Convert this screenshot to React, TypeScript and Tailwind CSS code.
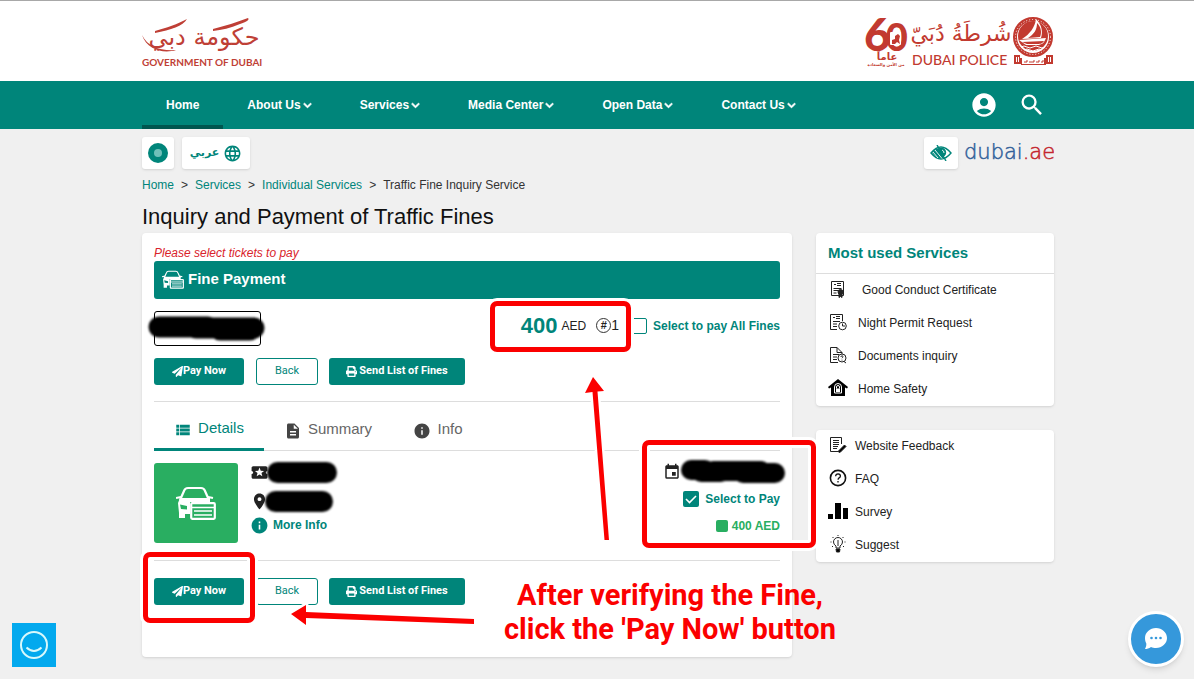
import React from 'react';
import {
  MdAccountCircle,
  MdDescription,
  MdEvent,
  MdInfo,
  MdLanguage,
  MdLocalPlay,
  MdPlace,
  MdSearch,
  MdViewList,
} from 'react-icons/md';
import { FaChevronDown, FaPaperPlane, FaPrint } from 'react-icons/fa';

const navItems = [
  { label: 'Home', active: true },
  { label: 'About Us' },
  { label: 'Services' },
  { label: 'Media Center' },
  { label: 'Open Data' },
  { label: 'Contact Us' },
];

const GovernmentLogo = () => (
  <svg width="122" height="52" viewBox="0 0 122 52" fill="#bf3f36" role="img" aria-label="Government of Dubai">
    <path d="M13 14 C24 11 36 7 45 2 C41 9 29 13 13 16Z" />
    <path d="M71 12 C83 9 95 5 106 1 C108 3 104 5 98 7 C88 11 80 13 71 14Z" />
    <path d="M0 18 C6 30 18 34 34 33 C22 37 5 33 0 18Z" />
    <text x="62" y="28" fontSize="24" textAnchor="middle" fontFamily="'DejaVu Sans', sans-serif" direction="rtl">
      حكومة دبي
    </text>
    <text x="0" y="49" fontSize="10" fontWeight="700" fontFamily="Lato, sans-serif">
      GOVERNMENT OF DUBAI
    </text>
  </svg>
);

const PoliceLogo = () => (
  <svg width="190" height="52" viewBox="0 0 190 52" fill="#c23a30" role="img" aria-label="Dubai Police">
    <text x="0" y="34" fontSize="46" fontWeight="900" fontFamily="Lato, sans-serif">
      6<tspan dx="-5" fontSize="38">0</tspan>
    </text>
    <rect x="26" y="15" width="11" height="13" rx="1" fill="#fff" />
    <path d="M28 27v-4l3-1v-3l3-2 2 2-1 4 1 4-3-2-2 2z" />
    <text x="23" y="43" fontSize="10" fontWeight="700" textAnchor="middle" fontFamily="'DejaVu Sans', sans-serif">عاماً</text>
    <text x="22" y="49" fontSize="4" fontWeight="700" textAnchor="middle" fontFamily="'DejaVu Sans', sans-serif">من الأمن والسعادة</text>

    <text x="97" y="24" fontSize="22" textAnchor="middle" fontFamily="'DejaVu Sans', sans-serif">شُرطَةُ دُبَيّ</text>
    <text x="48" y="48" fontSize="14" fontWeight="500" fontFamily="Lato, sans-serif">DUBAI POLICE</text>

    {/* crest */}
    <circle cx="169" cy="20" r="18" fill="none" stroke="#c23a30" strokeWidth="4" />
    <circle cx="169" cy="20" r="17.500" fill="none" stroke="#fff" strokeWidth="1" strokeDasharray="1 2" />
    <circle cx="169" cy="19" r="15" fill="#c23a30" />
    <path d="M172 2 C178 8 179 15 177 21 L158 22 C166 17 171 10 172 2Z" fill="#fff" />
    <path d="M173 6 C173 13 170 17 164 21 L176 20 C178 15 177 10 173 6Z" fill="#c23a30" />
    <path d="M155 23 L182 21 C180 26 178 28 173 28 H162Z" fill="#fff" />
    <path d="M158 25 L180 24 C178 27 176 27 172 27 H163Z" fill="#c23a30" />
    <path d="M157 30q3-2 6 0t6 0 6 0 6 0M160 33q3-2 6 0t6 0 6 0" fill="none" stroke="#fff" strokeWidth="1" />
    <path d="M150 38 h6 v3 h26 v-3 h7 v9 h-7 v1 h-25 v-1 h-7z" />
    <rect x="158" y="41" width="22" height="6" fill="#fff" />
    <path d="M160 45h3v-2M165 45h5v-2M172 45h3v-2M177 45h2v-2" fill="none" stroke="#c23a30" strokeWidth="1" />
    <path d="M152.500 40v5M154.500 40v5M184.500 40v5M186.500 40v5" stroke="#fff" />
  </svg>
);

const DubaiAeLogo = () => (
  <svg width="90" height="20" viewBox="0 0 90 20" fontFamily="'DejaVu Sans', sans-serif" fontWeight="200" fontSize="21" strokeWidth="0.500">
    <text x="0" y="16" fill="#34629b" stroke="#34629b">
      dubai<tspan fill="#c4262e" stroke="#c4262e">.ae</tspan>
    </text>
  </svg>
);

const CarCard = ({ className }: { className: string }) => (
  <svg className={className} viewBox="0 0 40 34" fill="none" stroke="#fff" strokeWidth="2.200" aria-hidden="true">
    <path d="M4 14 L8 5 Q9 2 12 2 H25 Q28 2 29 5 L33 14" />
    <path d="M0 12 L5 11 M32 11 L37 12" />
    <path d="M4 12 H34 V16 H14 V28 H9 V32 H3 V27 L2 17Z" fill="#fff" stroke="none" />
    <path d="M4 18.500 L11 20 V23.500 L5 23Z" fill="currentColor" stroke="none" />
    <rect x="15.200" y="17.200" width="23.600" height="15.600" rx="1" />
    <path d="M16 21.500 H38 M18 25 H36 M18 29 H36" strokeWidth="1.600" />
  </svg>
);

const EyeIcon = () => (
  <svg width="22" height="16" viewBox="0 0 22 16" fill="none" stroke="#00857a" strokeWidth="1.400" aria-hidden="true">
    <path d="M1 8 Q6 2 11 2 T21 8 Q16 14 11 14 T1 8Z" />
    <path d="M2 8 Q5 3 11 3 L14 13 Q7 15 2 8Z" fill="#00857a" stroke="none" />
    <circle cx="11.500" cy="7.500" r="4" fill="#00857a" />
    <path d="M3 7 L8 13 M5 5 L12 13.500 M12 5 a3 3 0 0 1 2 3" stroke="#fff" strokeWidth="0.900" />
    <path d="M7 0 L16 16" />
  </svg>
);

/* Sidebar drawings */
const CertificateIcon = () => (
  <svg width="20" height="18" viewBox="0 0 20 18" fill="none" stroke="#222" aria-hidden="true">
    <path d="M3.500 1.500h12v14h-12zM6 4.500h2M9 3.500h4M9 5.500h4M5.500 8.500h8M5.500 10.500h5M5.500 13h3" />
    <circle cx="12.500" cy="12" r="2.500" fill="#222" />
    <path d="M11 14v3.500l1.500-1 1.500 1V14" fill="#222" />
  </svg>
);

const PermitIcon = () => (
  <svg width="20" height="18" viewBox="0 0 20 18" fill="none" stroke="#222" aria-hidden="true">
    <path d="M9 16.500H2.500V1.500h12V8M5 4.500h2M8 3.500h4M8 5.500h4M5 8.500h7M5 11h4M5 13.500h4" />
    <circle cx="14.500" cy="13" r="3.800" fill="#fff" />
    <path d="M14.500 10.500V13H17" />
  </svg>
);

const InquiryIcon = () => (
  <svg width="20" height="18" viewBox="0 0 20 18" fill="none" stroke="#222" aria-hidden="true">
    <path d="M10 16.500H2.500v-15H9l5 5V8M9 1.500v5h5M5 8.500h6M5 11h4M5 13.500h4" />
    <circle cx="14" cy="12" r="4" fill="#fff" />
    <path d="M16 15.500l2 1.500M12.800 11q.2-1.300 1.400-1.200 1.400.4.500 1.500l-.7.900M14 13.700v.8" />
  </svg>
);

const SafetyIcon = () => (
  <svg width="20" height="18" viewBox="0 0 20 18" aria-hidden="true">
    <path d="M10 0 20 8l-1 1.500-2-1V17H3V8.500l-2 1L0 8z" fill="#000" />
    <path d="M6.500 14V8a3.500 3.500 0 0 1 7 0v6z" fill="none" stroke="#fff" />
    <path d="M8.500 9.500V8a1.500 1.500 0 0 1 3 0v1.500" fill="none" stroke="#fff" />
    <rect x="8" y="9.500" width="4" height="3.500" fill="#fff" />
  </svg>
);

const FeedbackIcon = () => (
  <svg width="20" height="18" viewBox="0 0 20 18" fill="none" stroke="#222" aria-hidden="true">
    <path d="M13.500 8V1.500h-11v14h8M5 4.500h6M5 6.500h6M5 8.500h6M5 10.500h5M5 12.500h4" />
    <path d="M10 15.500 16.500 9l1.500 1.500-6 6z" fill="#000" />
  </svg>
);

const FaqIcon = () => (
  <svg width="20" height="18" viewBox="0 0 20 18" fill="none" stroke="#111" strokeWidth="1.600" aria-hidden="true">
    <circle cx="10" cy="9" r="7.600" />
    <path d="M7.600 7.200q.2-2.400 2.500-2.400 2.300.2 2.300 2.200 0 1.200-1.300 1.900-1 .6-1 1.800M10 12v1.500" strokeWidth="1.300" />
  </svg>
);

const SurveyIcon = () => (
  <svg width="20" height="18" viewBox="0 0 20 18" fill="#000" aria-hidden="true">
    <path d="M0 12h5v5H0zM7 1h6v16H7zM15 6h5v11h-5z" />
  </svg>
);

const SuggestIcon = () => (
  <svg width="20" height="18" viewBox="0 0 20 18" fill="none" stroke="#222" aria-hidden="true">
    <path d="M8 13v-2Q5.500 9.500 5.500 7a4.500 4.500 0 0 1 9 0Q14.500 9.500 12 11v2z" />
    <path d="M10 5v6M10 0v1M4.500 2l1 1M15.500 2l-1 1M2.500 7h1M16.500 7h1M4 12l1-1M16 12l-1-1" />
    <path d="M8 14h4l-.5 3h-3z" fill="#000" />
  </svg>
);

const mostUsed = [
  { label: 'Good Conduct Certificate', icon: <CertificateIcon />, gap: 'gap-[14px]' },
  { label: 'Night Permit Request', icon: <PermitIcon />, gap: 'gap-[10px]' },
  { label: 'Documents inquiry', icon: <InquiryIcon />, gap: 'gap-[10px]' },
  { label: 'Home Safety', icon: <SafetyIcon />, gap: 'gap-[10px]' },
];

const helpLinks = [
  { label: 'Website Feedback', icon: <FeedbackIcon />, gap: 'gap-[7px]' },
  { label: 'FAQ', icon: <FaqIcon />, gap: 'gap-[7px]' },
  { label: 'Survey', icon: <SurveyIcon />, gap: 'gap-[7px]' },
  { label: 'Suggest', icon: <SuggestIcon />, gap: 'gap-[7px]' },
];

const LinkList = ({ items }: { items: typeof mostUsed }) => (
  <ul>
    {items.map((item) => (
      <li key={item.label}>
        <a href="#" className={`flex h-[33px] items-start pl-3 pt-1.5 text-[12px] leading-5 text-[#222] ${item.gap}`}>
          {item.icon}
          {item.label}
        </a>
      </li>
    ))}
  </ul>
);

const ActionRow = () => (
  <div className="flex h-[27px] font-[Roboto,sans-serif] text-[11px]">
    <button className="flex w-[90px] items-center justify-center rounded-[3px] bg-[#00857a] font-bold text-white">
      <FaPaperPlane size={11} />
      Pay Now
    </button>
    <button className="ml-3 w-[62px] rounded-[3px] border border-[#00857a] text-[#00857a]">Back</button>
    <button className="ml-[11px] flex w-[136px] items-center justify-center gap-0.5 rounded-[3px] bg-[#00857a] font-bold text-white">
      <FaPrint size={11} />
      Send List of Fines
    </button>
  </div>
);

const Annotations = () => (
  <div className="pointer-events-none absolute inset-0">
    <div className="absolute left-[348px] top-[172px] h-[51px] w-[141px] rounded-[7px] border-[5px] border-[#fb0000] shadow-[0_0_0_3px_#fff]" />
    <div className="absolute left-[500px] top-[311px] h-[108px] w-[174px] rounded-[7px] border-[5px] border-[#fb0000] shadow-[0_0_0_3px_#fff,inset_0_0_0_3px_#fff]" />
    <div className="absolute left-px top-[423px] h-[71px] w-[112px] rounded-[7px] border-[5px] border-[#fb0000] shadow-[0_0_0_3px_#fff,inset_0_0_0_3px_#fff]" />
    <svg className="absolute left-0 top-0" width="700" height="540" viewBox="0 0 700 540" fill="#fb0000" aria-hidden="true">
      <g stroke="#fff" strokeWidth="5" strokeLinejoin="round" paintOrder="stroke">
        <path d="M451 248 L462 262 L455.500 262.500 L467 411 L462.500 411 L450.500 263 L443 264Z" />
        <path d="M149 485 L164 476 L164 483 L332 490 L332 495 L164 489 L164 496Z" />
      </g>
    </svg>
    <p className="absolute left-[338px] top-[449px] w-[380px] text-center font-[Roboto,sans-serif] text-[29px] font-bold leading-[34px] text-[#fb0000]">
      After verifying the Fine,
      <br />
      click the 'Pay Now' button
    </p>
  </div>
);

export default function App() {
  return (
    <div className="min-h-screen bg-[#f0f0f0] font-['Liberation_Sans',Arial,sans-serif] text-[12px] text-[#222]">
      <header className="border-t border-[#a8a8a8] bg-white pl-0.5">
        <div className="mx-auto flex h-20 max-w-[912px] items-start justify-between pt-4">
          <GovernmentLogo />
          <PoliceLogo />
        </div>
      </header>

      <nav className="bg-[#00857a] pl-0.5 text-white">
        <div className="mx-auto flex h-12 max-w-[912px] items-stretch">
          {navItems.map((item) => (
            <a
              key={item.label}
              href="#"
              className={`flex items-center gap-0.5 border-b-4 px-6 pt-1 font-bold ${item.active ? 'border-[#00564f]' : 'border-transparent'}`}
            >
              {item.label}
              {!item.active && <FaChevronDown size={9} stroke="currentColor" strokeWidth={40} />}
            </a>
          ))}
          <div className="ml-auto flex items-center gap-5 pr-2">
            <button aria-label="Account">
              <MdAccountCircle size={28} />
            </button>
            <button aria-label="Search">
              <MdSearch size={28} />
            </button>
          </div>
        </div>
      </nav>

      <div className="pl-0.5">
        <div className="relative mx-auto max-w-[912px] pb-5 pt-2">
          {/* Toolbar */}
          <div className="flex h-8 items-stretch">
            <button aria-label="Theme" className="flex w-8 items-center justify-center rounded-[3px] bg-white shadow-sm">
              <span className="flex size-5 items-center justify-center rounded-full bg-[#00857a]">
                <span className="size-2 rounded-full bg-[#6fc0b9]" />
              </span>
            </button>
            <button className="ml-2 flex w-[68px] items-center justify-center gap-1 rounded-[3px] bg-white font-['DejaVu_Sans',sans-serif] text-[11px] font-bold text-[#00857a] shadow-sm">
              <span lang="ar">عربي</span>
              <MdLanguage size={19} />
            </button>
            <button aria-label="Accessibility" className="ml-auto flex w-[34px] items-center justify-center rounded-[3px] bg-white shadow-sm">
              <EyeIcon />
            </button>
            <a href="#" aria-label="dubai.ae" className="ml-[6px] flex items-center">
              <DubaiAeLogo />
            </a>
          </div>

          {/* Breadcrumb */}
          <div className="mt-2 flex h-4 items-center gap-[7px] text-[#333]">
            <a href="#" className="text-[#00857a]">Home</a>
            <span>&gt;</span>
            <a href="#" className="text-[#00857a]">Services</a>
            <span>&gt;</span>
            <a href="#" className="text-[#00857a]">Individual Services</a>
            <span>&gt;</span>
            <span>Traffic Fine Inquiry Service</span>
          </div>

          <h1 className="mt-2.5 h-[30px] text-[22px] leading-[28px] text-[#111]">Inquiry and Payment of Traffic Fines</h1>

          <div className="flex items-start gap-6">
            <main className="min-w-0 flex-1 rounded-[4px] bg-white px-3 pb-[52px] pt-3 shadow">
              <p className="h-4 text-[12px] italic leading-4 text-[#d9232b]">Please select tickets to pay</p>
              <div className="flex h-[38px] items-center gap-1 rounded-[3px] bg-[#00857a] pb-0.5 pl-2 text-[15px] font-bold text-white">
                <span className="text-[#00857a]">
                  <CarCard className="h-[19px] w-[22px]" />
                </span>
                <h2>Fine Payment</h2>
              </div>

              <div className="mt-3 flex h-[35px] items-start">
                <div className="relative h-full w-[107px]">
                  <input aria-label="Plate number" className="h-full w-full rounded-[3px] border border-black" />
                  <svg className="absolute -left-2 top-0 overflow-visible" width="120" height="35" viewBox="0 0 120 35" aria-hidden="true">
                    <path
                      d="M13 16 H62 M50 17 H108 M74 19 H104"
                      fill="none"
                      stroke="#000"
                      strokeWidth="21"
                      strokeLinecap="round"
                      className="blur-[1px]"
                    />
                  </svg>
                </div>
                <div className="ml-auto flex h-[29px] items-center">
                  <strong className="text-[22px] text-[#00857a]">400</strong>
                  <span className="ml-1">AED</span>
                  <span className="ml-2.5 flex size-[15px] items-center justify-center rounded-full border border-[#333] text-[11px] font-bold">#</span>
                  <span className="text-[14px]">1</span>
                  <label className="ml-3 flex items-center gap-1.5 font-bold text-[#00857a]">
                    <input type="checkbox" className="size-4 appearance-none rounded-[2px] border border-[#00857a]" />
                    Select to pay All Fines
                  </label>
                </div>
              </div>

              <div className="mt-3">
                <ActionRow />
              </div>

              <div className="mt-4 flex h-[50px] items-stretch border-b border-t border-[#ddd] text-[15px] text-[#666]">
                <button className="-mb-px flex w-[110px] items-center justify-center gap-1.5 border-b-[3px] border-[#00857a] pt-2.5 text-[#00857a]">
                  <MdViewList size={18} />
                  <span className="pb-1">Details</span>
                </button>
                <button className="flex w-[128px] items-center justify-center gap-1.5 pt-2.5">
                  <MdDescription size={18} className="text-[#444]" />
                  <span className="pb-1">Summary</span>
                </button>
                <button className="flex w-[92px] items-center justify-center gap-1.5 pt-2.5">
                  <MdInfo size={18} className="text-[#444]" />
                  <span className="pb-1">Info</span>
                </button>
              </div>

              <section className="flex border-b border-[#ddd] pb-[17px] pt-3">
                <div className="flex h-20 w-[84px] items-center justify-center rounded-[3px] bg-[#29ae61] text-[#29ae61]">
                  <CarCard className="h-[34px] w-10" />
                </div>
                <div className="ml-3 flex flex-col">
                  <div className="flex h-[18px] items-center">
                    <MdLocalPlay size={19} className="text-[#222]" />
                    <span className="-ml-0.5 h-[21px] w-[70px] rounded-full bg-black blur-[1px]" />
                  </div>
                  <div className="mt-2 flex h-6 items-center">
                    <MdPlace size={19} className="text-[#222]" />
                    <span className="-ml-1 h-[21px] w-[68px] rounded-full bg-black blur-[1px]" />
                  </div>
                  <button className="mt-0.5 flex h-5 items-center gap-1 font-bold text-[#00857a]">
                    <MdInfo size={19} />
                    More Info
                  </button>
                </div>
                <div className="ml-auto flex flex-col items-end">
                  <div className="flex h-[18px] items-center">
                    <MdEvent size={18} className="text-[#222]" />
                    <svg className="overflow-visible" width="99" height="20" viewBox="0 0 99 20" aria-hidden="true">
                      <path
                        d="M10 8 H24 M20 10 H40 M32 9 H80 M62 11 H94"
                        fill="none"
                        stroke="#000"
                        strokeWidth="20"
                        strokeLinecap="round"
                        className="blur-[1px]"
                      />
                    </svg>
                  </div>
                  <label className="mt-2.5 flex h-4 items-center gap-1.5 font-bold text-[#00857a]">
                    <span className="relative flex size-4">
                      <input type="checkbox" defaultChecked className="size-4 appearance-none rounded-[2px] bg-[#00857a]" />
                      <svg className="absolute inset-0" viewBox="0 0 16 16" fill="none" stroke="#fff" strokeWidth="1.600" aria-hidden="true">
                        <path d="M3 8 L6.500 11.500 L13 5" />
                      </svg>
                    </span>
                    Select to Pay
                  </label>
                  <div className="mt-2.5 flex items-center gap-1 font-bold text-[#29ae61]">
                    <span className="size-3 rounded-[2px] bg-[#29ae61]" />
                    400 AED
                  </div>
                </div>
              </section>

              <div className="mt-[17px]">
                <ActionRow />
              </div>
            </main>

            <aside className="w-[238px] shrink-0 space-y-6">
              <div className="rounded-[4px] bg-white shadow">
                <h2 className="flex h-[41px] items-center border-b border-[#ddd] pl-3 text-[15px] font-bold text-[#00857a]">
                  Most used Services
                </h2>
                <LinkList items={mostUsed} />
              </div>
              <div className="rounded-[4px] bg-white shadow">
                <LinkList items={helpLinks} />
              </div>
            </aside>
          </div>

          <Annotations />
        </div>
      </div>

      <button aria-label="Happiness meter" className="fixed bottom-3 left-3 flex size-11 items-center justify-center bg-[#03a9ee]">
        <svg width="30" height="30" viewBox="0 0 30 30" fill="none" stroke="#d8f8fb" strokeWidth="2" aria-hidden="true">
          <circle cx="15" cy="15" r="13" />
          <path d="M7.500 17.500 Q15 24.500 22.500 17.500" />
        </svg>
      </button>

      <button
        aria-label="Chat"
        className="fixed bottom-3 right-[10px] flex size-14 items-center justify-center rounded-full border-[3px] border-white bg-[#3598db] shadow-md"
      >
        <svg width="24" height="24" viewBox="0 0 24 24" aria-hidden="true">
          <path d="M12 1 C18 1 23 5.500 23 11 C23 16.500 18 21 12 21 C10 21 8.500 20.700 7 20 C5 21.500 3 22 1 22 C2 20 2.500 18.500 2.300 16.500 C1.500 15 1 13 1 11 C1 5.500 6 1 12 1Z" fill="#fff" />
          <circle cx="7.500" cy="11" r="1.300" fill="#3598db" />
          <circle cx="12" cy="11" r="1.300" fill="#3598db" />
          <circle cx="16.500" cy="11" r="1.300" fill="#3598db" />
        </svg>
      </button>
    </div>
  );
}
